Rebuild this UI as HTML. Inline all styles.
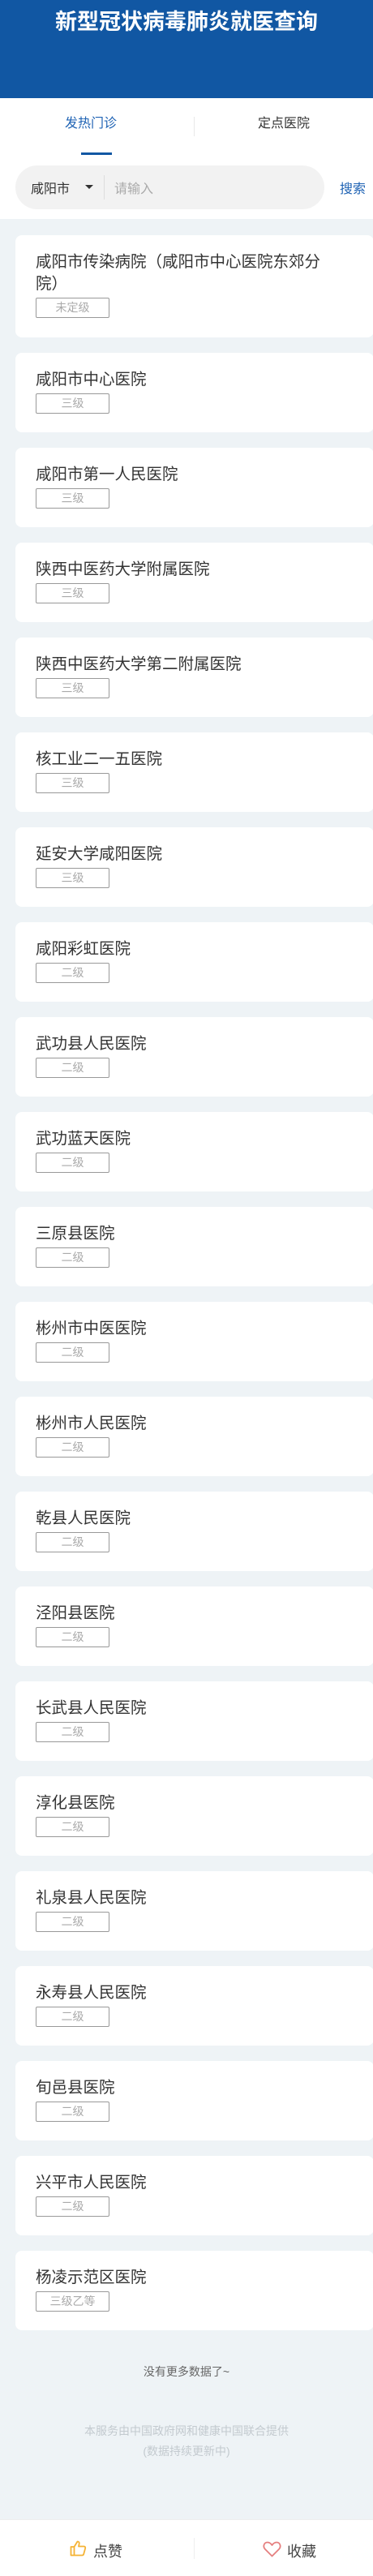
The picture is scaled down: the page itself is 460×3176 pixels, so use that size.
<!DOCTYPE html>
<html><head><meta charset="utf-8"><style>
*{margin:0;padding:0;box-sizing:border-box}
body{width:460px;height:3176px;background:#eef3f6;font-family:"Liberation Sans","Noto Sans CJK SC",sans-serif;position:relative;overflow:hidden}
.hd{height:121px;background:#1157a3;color:#fff;font-size:27px;font-weight:bold;text-align:center;padding-top:5px;letter-spacing:0px}
.top{background:#fff;height:149px;position:relative}
.tab{position:absolute;top:17px;font-size:16px}
.t1{left:80px;color:#1f63b4}.t2{left:318px;color:#333}
.ul{position:absolute;left:100px;top:67px;width:38px;height:3px;background:#1157a3}
.vd{position:absolute;left:239px;top:23px;width:1px;height:24px;background:#e8e8e8}
.sb{position:absolute;left:19px;top:83px;width:381px;height:54px;border-radius:27px;background:#f2f2f2}
.city{position:absolute;left:19px;top:15px;font-size:16px;color:#333}
.car{position:absolute;left:86px;top:24px;border:5px solid transparent;border-top:5px solid #333}
.sd{position:absolute;left:109px;top:12px;width:1px;height:30px;background:#ddd}
.ph{position:absolute;left:122px;top:15px;font-size:16px;color:#aaa}
.srch{position:absolute;left:419px;top:98px;font-size:16px;color:#1f63b4}
.card{position:absolute;left:19px;width:442px;background:#fff;border-radius:8px;padding:20px 50px 0 25px}
.nm{font-size:19.5px;color:#333;line-height:27px}
.tag{margin-top:3px;width:91px;height:25px;border:1px solid #999;border-radius:2px;color:#aaa;font-size:14px;text-align:center;line-height:23px}
.more{position:absolute;top:2914px;width:100%;text-align:center;font-size:14px;color:#666}
.ft{position:absolute;top:2985px;width:100%;text-align:center;font-size:14px;color:#c3cacf;line-height:25px}
.bb{position:absolute;top:3106px;left:0;width:460px;height:70px;background:#fff;border-top:1px solid #eee}
.bt{position:absolute;top:25px;font-size:18px;color:#444}
</style></head><body>
<div class="hd">新型冠状病毒肺炎就医查询</div>
<div class="top">
<div class="tab t1">发热门诊</div><div class="vd"></div><div class="tab t2">定点医院</div>
<div class="ul"></div>
<div class="sb"><span class="city">咸阳市</span><span class="car"></span><span class="sd"></span><span class="ph">请输入</span></div>
<div class="srch">搜索</div>
</div>
<div class="card" style="top:290px;height:126px"><div class="nm">咸阳市传染病院（咸阳市中心医院东郊分院）</div><div class="tag">未定级</div></div>
<div id="list"></div>
<div class="more">没有更多数据了~</div>
<div class="ft">本服务由中国政府网和健康中国联合提供<br>(数据持续更新中)</div>
<div class="bb">
<svg style="position:absolute;left:86px;top:25px" width="21" height="20" viewBox="0 0 21 20"><path d="M1.5 8h4v10.5h-4zM5.5 8l4-6.5c1.5 0 2.5 1 2.200 2.6L11 7.5h6.5c1.300 0 2 1.100 1.700 2.300l-2 7.200c-.3 1-1 1.500-2 1.500H5.5" fill="none" stroke="#f5b335" stroke-width="1.8" stroke-linejoin="round"/></svg>
<span class="bt" style="left:115px">点赞</span>
<div style="position:absolute;left:239px;top:22px;width:1px;height:26px;background:#eee"></div>
<svg style="position:absolute;left:324px;top:26px" width="23" height="20" viewBox="0 0 23 20"><path d="M11.5 18.5L3 10C0 7 1.2 1.5 6 1.5c2.5 0 4.2 1.7 5.5 3.5C12.8 3.2 14.5 1.5 17 1.5c4.8 0 6 5.5 3 8.5z" fill="none" stroke="#e57f7f" stroke-width="1.8" stroke-linejoin="round"/></svg>
<span class="bt" style="left:354px">收藏</span>
</div>
<script>
var d=[["咸阳市中心医院","三级"],["咸阳市第一人民医院","三级"],["陕西中医药大学附属医院","三级"],["陕西中医药大学第二附属医院","三级"],["核工业二一五医院","三级"],["延安大学咸阳医院","三级"],["咸阳彩虹医院","二级"],["武功县人民医院","二级"],["武功蓝天医院","二级"],["三原县医院","二级"],["彬州市中医医院","二级"],["彬州市人民医院","二级"],["乾县人民医院","二级"],["泾阳县医院","二级"],["长武县人民医院","二级"],["淳化县医院","二级"],["礼泉县人民医院","二级"],["永寿县人民医院","二级"],["旬邑县医院","二级"],["兴平市人民医院","二级"],["杨凌示范区医院","三级乙等"]];
var h="";d.forEach(function(x,i){h+='<div class="card" style="top:'+(435+i*117)+'px;height:98px"><div class="nm">'+x[0]+'</div><div class="tag">'+x[1]+'</div></div>';});
document.getElementById("list").innerHTML=h;
</script>
</body></html>
